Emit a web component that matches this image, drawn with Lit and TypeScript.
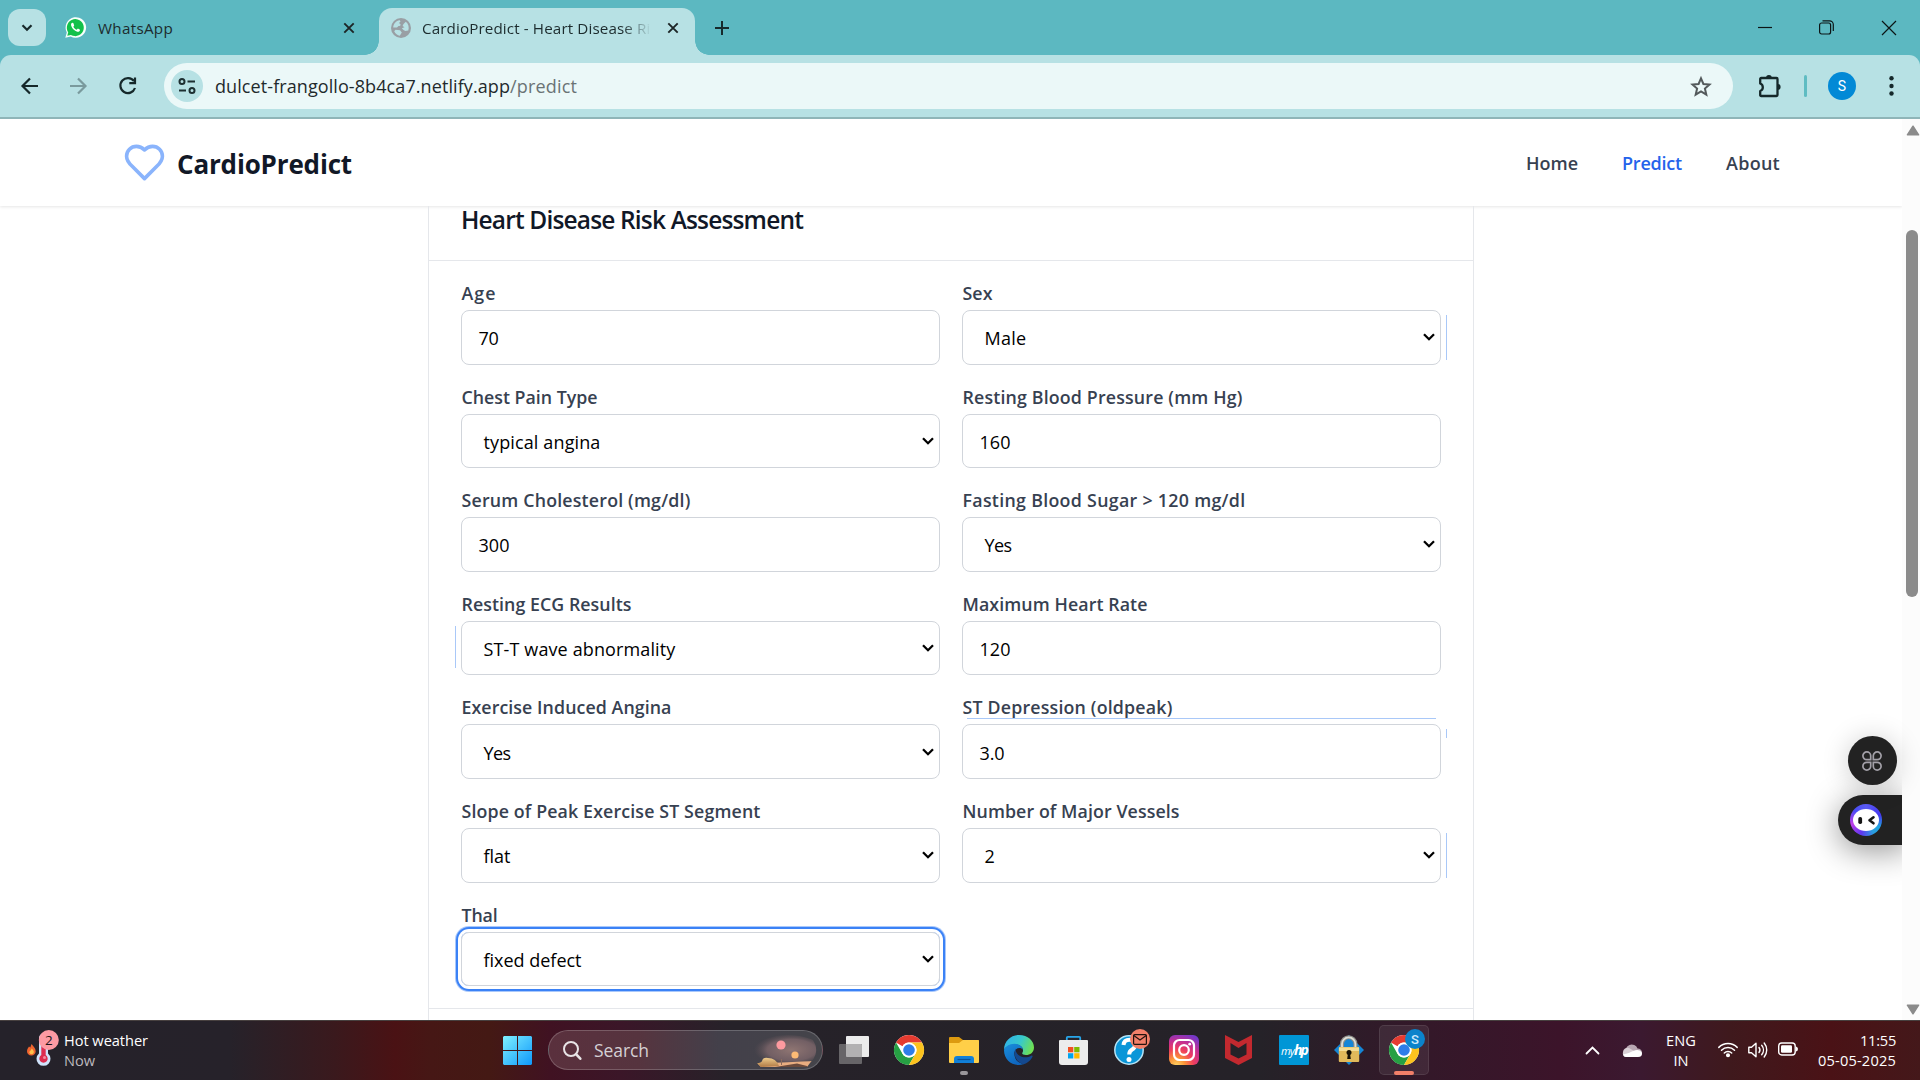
import { LitElement, html, svg, css, nothing } from "lit";
import { customElement, property } from "lit/decorators.js";

/** One line of text whose tracking is set so that it spans `w` pixels. */
@customElement("fit-text")
class FitText extends LitElement {
  @property({ type: Number }) w = 0;
  static styles = css`
    :host { display: inline-block; white-space: pre; flex: none; }
  `;
  render() {
    return html`<slot></slot>`;
  }
  firstUpdated() {
    this.fit();
    document.fonts?.ready.then(() => this.fit());
  }
  fit() {
    const n = (this.textContent ?? "").length;
    if (!this.w || !n) return;
    this.style.letterSpacing = "0px";
    const natural = this.getBoundingClientRect().width;
    this.style.letterSpacing = `${((this.w - natural) / n).toFixed(3)}px`;
  }
}

const t = (text: string, w: number) => html`<fit-text .w=${w}>${text}</fit-text>`;

type Field = {
  label: string;
  lw: number;
  value: string;
  vw: number;
  select?: boolean;
  focus?: boolean;
  trace?: string;
};

const FIELDS: Field[] = [
  { label: "Age", lw: 35, value: "70", vw: 20 },
  { label: "Sex", lw: 30, value: "Male", vw: 42, select: true, trace: "right" },
  { label: "Chest Pain Type", lw: 136, value: "typical angina", vw: 117, select: true },
  { label: "Resting Blood Pressure (mm Hg)", lw: 280, value: "160", vw: 31 },
  { label: "Serum Cholesterol (mg/dl)", lw: 229, value: "300", vw: 31 },
  { label: "Fasting Blood Sugar > 120 mg/dl", lw: 283, value: "Yes", vw: 27, select: true },
  { label: "Resting ECG Results", lw: 170, value: "ST-T wave abnormality", vw: 192, select: true, trace: "left" },
  { label: "Maximum Heart Rate", lw: 185, value: "120", vw: 31 },
  { label: "Exercise Induced Angina", lw: 210, value: "Yes", vw: 27, select: true },
  { label: "ST Depression (oldpeak)", lw: 210, value: "3.0", vw: 25, trace: "top" },
  { label: "Slope of Peak Exercise ST Segment", lw: 299, value: "flat", vw: 27, select: true },
  { label: "Number of Major Vessels", lw: 217, value: "2", vw: 10, select: true, trace: "right" },
  { label: "Thal", lw: 36, value: "fixed defect", vw: 98, select: true, focus: true },
];

const closeX = html`<svg width="12" height="12" viewBox="0 0 12 12"><path d="M1.3 1.3 10.7 10.7M10.7 1.3 1.3 10.7" stroke="#1c2526" stroke-width="1.900" fill="none"/></svg>`;

const chrome = html`<svg width="30" height="30" viewBox="0 0 48 48">
  <circle cx="24" cy="24" r="24" fill="#fff"/>
  <path d="M3.2 12A24 24 0 0 1 44.8 12H24A12 12 0 0 0 13.6 18Z" fill="#e53b30"/>
  <path d="M3.2 12A24 24 0 0 0 24 48L34.4 30A12 12 0 0 1 13.6 30Z" fill="#26a043"/>
  <path d="M44.8 12A24 24 0 0 1 24 48L34.4 30A12 12 0 0 0 34.4 18L24 12Z" fill="#fcc31e"/>
  <circle cx="24" cy="24" r="12" fill="#fff"/>
  <circle cx="24" cy="24" r="9.3" fill="#2f7de9"/>
</svg>`;

@customElement("browser-chrome")
class BrowserChrome extends LitElement {
  static styles = css`
    :host { display: block; height: 119px; background: #5cb8c1; font-family: "Open Sans", "Noto Sans", sans-serif; color: #1c2b2d; }
    svg { display: block; flex: none; overflow: visible; }
    .tabs { display: flex; height: 55px; align-items: center; }
    .search { width: 38px; height: 37px; margin-left: 8px; border-radius: 12px; background: #b7e1e4; display: grid; place-items: center; }
    .tab { display: flex; align-items: center; box-sizing: border-box; font-size: 15.200px; }
    .idle { width: 333px; padding: 0 24px 0 19px; gap: 12px; }
    .grow { flex: 1; }
    .active { width: 316px; height: 47px; margin-top: 8px; padding: 0 15px 8px 12px; background: #b7e1e4; border-radius: 13px 13px 0 0; position: relative; }
    .active::before, .active::after { content: ""; position: absolute; bottom: 0; width: 14px; height: 14px; }
    .active::before { left: -14px; background: radial-gradient(circle at 0 0, transparent 13.5px, #b7e1e4 14px); }
    .active::after { right: -14px; background: radial-gradient(circle at 100% 0, transparent 13.5px, #b7e1e4 14px); }
    .title { width: 230px; margin-left: 11px; margin-right: 15px; overflow: hidden; -webkit-mask-image: linear-gradient(90deg, #000 200px, transparent 229px); mask-image: linear-gradient(90deg, #000 200px, transparent 229px); }
    .title fit-text { display: block; width: max-content; }
    .plus { margin-left: 20px; }
    .win { display: flex; gap: 48px; margin-left: auto; margin-right: 24px; align-items: center; }
    .bar { display: flex; align-items: center; box-sizing: border-box; height: 64px; background: #b7e1e4; border-bottom: 2px solid #8fb5b8; border-radius: 11px 11px 0 0; padding: 0 20px; }
    .nav { display: flex; gap: 29px; width: 144px; align-items: center; }
    .pill { display: flex; align-items: center; box-sizing: border-box; width: 1569px; height: 46px; border-radius: 23px; background: #ebf8f8; padding: 0 21px 0 7px; font-size: 18px; color: #1f2a2c; }
    .site { width: 32px; height: 32px; border-radius: 50%; background: #b7e1e4; display: grid; place-items: center; margin-right: 12px; }
    .path { color: #6a7375; }
    .pill .star { margin-left: auto; }
    .ext { margin-left: 25px; }
    .sep { width: 3px; height: 22px; border-radius: 2px; background: #5fbcc2; margin-left: 23px; }
    .avatar { width: 28px; height: 28px; border-radius: 50%; background: #0289d6; color: #fff; font: 14px Roboto, sans-serif; display: grid; place-items: center; margin-left: 21px; }
    .dots { margin-left: 33px; }
  `;
  render() {
    return html`
      <div class="tabs">
        <div class="search">
          <svg width="12" height="8" viewBox="0 0 12 8"><path d="M1.5 1.3 6 5.8 10.5 1.3" stroke="#18292b" stroke-width="2.2" fill="none"/></svg>
        </div>
        <div class="tab idle">
          <svg width="21" height="21" viewBox="0 0 21 21">
            <path d="M.3 20.8 1.8 15.400A10.300 10.300 0 1 1 5.700 19.400Z" fill="#f7fffb"/>
            <path d="M2.300 18.800 3.200 15.300A8.500 8.500 0 1 1 5.900 17.900Z" fill="#12c14a"/>
            <path d="M7.200 5.800C6 6.400 5.800 7.700 6.300 9 7.300 11.700 9.400 13.900 12.200 14.700 13.600 15.100 15 14.300 15 12.700L12.900 11.500 11.700 12.800C10.100 12.200 9 11 8.400 9.700L9.200 8.600 8.300 6Z" fill="#fff"/>
          </svg>
          ${t("WhatsApp", 75)}
          <span class="grow"></span>
          ${closeX}
        </div>
        <div class="tab active">
          <svg width="20" height="20" viewBox="0 0 20 20">
            <circle cx="10" cy="10" r="10" fill="#999fa4"/>
            <path d="M2.200 9.600C2.200 5.800 5 2.600 8.800 2.200L9.500 3.500 8 5 9.500 6.200C9.800 7.800 8.800 8 7.500 8.100L6 9.400ZM10.800 10.300 13.500 9.300 11.600 8 12.500 6 14.800 3.800C17.600 6 18.300 9.500 17.300 12.600L14.300 13 12.500 12ZM4.500 11.800 9 12.200 10.800 14.500 8.800 17.800C6.500 17.400 4.400 15.800 3.200 13.300Z" fill="#b7e1e4"/>
          </svg>
          <div class="title">${t("CardioPredict - Heart Disease Risk", 244)}</div>
          ${closeX}
        </div>
        <svg class="plus" width="14" height="14" viewBox="0 0 14 14"><path d="M7 0V14M0 7H14" stroke="#172a2c" stroke-width="2"/></svg>
        <div class="win">
          <svg width="14" height="14" viewBox="0 0 14 14"><path d="M1 6.500H15" stroke="#0c1516" stroke-width="1.200"/></svg>
          <svg width="15" height="15" viewBox="0 0 15 15"><rect x=".6" y="3" width="11" height="11" rx="2" fill="none" stroke="#0c1516" stroke-width="1.200"/><path d="M3.500.8H10.500A3.800 3.800 0 0 1 14.300 4.600V11" fill="none" stroke="#0c1516" stroke-width="1.200"/></svg>
          <svg width="14" height="14" viewBox="0 0 14 14"><path d="M0 0 14 14M14 0 0 14" stroke="#0c1516" stroke-width="1.200"/></svg>
        </div>
      </div>
      <div class="bar">
        <div class="nav">
          <svg width="20" height="18" viewBox="0 0 20 18"><path d="M18 9H3M10 1.500 2.500 9 10 16.500" fill="none" stroke="#15282a" stroke-width="2.200"/></svg>
          <svg width="20" height="18" viewBox="0 0 20 18"><path d="M1 9H16M9 1.500 16.500 9 9 16.500" fill="none" stroke="#7a9a9d" stroke-width="2.200"/></svg>
          <svg width="20" height="20" viewBox="0 0 20 20"><path d="M16 5.200A7.500 7.500 0 1 0 17 12M17 1.500V7.200H11.300" fill="none" stroke="#15282a" stroke-width="2.200"/></svg>
        </div>
        <div class="pill">
          <div class="site">
            <svg width="18" height="16" viewBox="0 0 18 16" fill="none" stroke="#1d2f31" stroke-width="2"><circle cx="4" cy="3.500" r="2.500"/><path d="M9.500 3.500H17M1 12.500H8"/><circle cx="14" cy="12.500" r="2.500"/></svg>
          </div>
          ${t("dulcet-frangollo-8b4ca7.netlify.app", 295)}<span class="path">${t("/predict", 67)}</span>
          <svg class="star" width="22" height="21" viewBox="0 0 22 21"><path d="M11 2.300 13.400 8 19.500 8.500 14.900 12.600 16.300 18.600 11 15.400 5.700 18.600 7.100 12.600 2.500 8.500 8.600 8Z" fill="none" stroke="#53595b" stroke-width="2"/></svg>
        </div>
        <svg class="ext" width="23" height="23" viewBox="0 0 23 23"><path d="M3.200 3H18.500Q19.500 3 19.500 4V20Q19.500 21 18.500 21H3.200Q2.200 21 2.200 20V16A4 4 0 0 0 2.200 8.500V4Q2.200 3 3.200 3Z" fill="none" stroke="#15282a" stroke-width="2.300" stroke-linejoin="round"/><path d="M8 3A2.900 2.900 0 0 1 13.800 3ZM19.700 9A2.900 2.900 0 0 1 19.700 14.800Z" fill="#15282a"/></svg>
        <div class="sep"></div>
        <div class="avatar">S</div>
        <svg class="dots" width="5" height="20" viewBox="0 0 5 20" fill="#15282a"><circle cx="2.500" cy="2.200" r="2.200"/><circle cx="2.500" cy="10" r="2.200"/><circle cx="2.500" cy="17.500" r="2.200"/></svg>
      </div>
    `;
  }
}

@customElement("cardio-page")
class CardioPage extends LitElement {
  static styles = css`
    :host { display: flex; height: 901px; background: #fff; position: relative; overflow: hidden; font-family: "Open Sans", "Noto Sans", sans-serif; }
    svg { display: block; flex: none; overflow: visible; }
    .view { width: 1902px; display: flex; flex-direction: column; }
    header { display: flex; align-items: center; box-sizing: border-box; height: 87px; flex: none; padding: 0 122px 0 123px; box-shadow: 0 1px 3px rgba(0, 0, 0, 0.1); }
    .brand { font-size: 26px; font-weight: 700; color: #111827; margin-left: 11px; padding-top: 2px; }
    nav { display: flex; gap: 44px; margin-left: auto; font-size: 18px; font-weight: 570; color: #374151; }
    nav .on { color: #2563eb; }
    .card { width: 1046px; box-sizing: border-box; margin-left: 428px; flex: 1; border: solid #e5e7eb; border-width: 0 1px; display: flex; flex-direction: column; }
    h1 { margin: 0; box-sizing: border-box; height: 55px; border-bottom: 1px solid #e5e7eb; padding: 0 32px; font-size: 24.500px; line-height: 27px; font-weight: 560; color: #111827; }
    .grid { display: grid; grid-template-columns: 479px 479px; column-gap: 22px; grid-auto-rows: 103.600px; padding: 19px 32px 0; height: 728px; border-bottom: 1px solid #e5e7eb; }
    .label { height: 30px; line-height: 27px; font-size: 17.800px; font-weight: 570; color: #374151; padding-left: 0.500px; }
    .box { box-sizing: border-box; height: 54.600px; border: 1px solid #d1d5db; border-radius: 8px; padding: 2px 5px 0 16.500px; display: flex; align-items: center; justify-content: space-between; font-size: 18px; color: #000; position: relative; }
    .select { padding-left: 21.500px; }
    .select svg { margin-top: -2px; }
    .focus { box-shadow: 0 0 0 3px #fff, 0 0 0 5px #3b82f6, 0 0 0 6px #a9c8fb; }
    .trace::before, .trace::after { content: ""; position: absolute; background: #a9c8f8; }
    .right::before { right: -7px; top: 4px; width: 1px; height: 45px; }
    .left::before { left: -7px; top: 4px; width: 1px; height: 42px; }
    .top::before { left: 4px; right: 4px; top: -7px; height: 1px; }
    .top::after { right: -7px; top: 4px; width: 1px; height: 9px; }
    .scroll { width: 18px; background: #fcfcfc; box-sizing: border-box; padding: 6px 2px 5px 4px; display: flex; flex-direction: column; justify-content: space-between; }
    .thumb { width: 12px; height: 367px; border-radius: 6px; background: #8b8b8b; margin-bottom: 314px; }
    .fab { position: absolute; left: 1848px; top: 617px; width: 49px; height: 49px; border-radius: 50%; background: #222; display: grid; place-items: center; box-shadow: 0 2px 28px rgba(0, 0, 0, 0.2); }
    .fab svg { margin-right: 1px; }
    .clip { position: absolute; left: 1740px; top: 560px; width: 162px; height: 280px; overflow: hidden; }
    .bot { position: absolute; left: 98px; top: 116px; width: 70px; height: 50px; border-radius: 25px 0 0 25px; background: #222; box-shadow: 0 6px 32px rgba(0, 0, 0, 0.42); display: flex; align-items: center; padding-left: 12px; box-sizing: border-box; }
    .face { width: 32px; height: 32px; border-radius: 50%; background: conic-gradient(#5b5cf5, #4537f0 70deg, #20a7e0 120deg, #2a9ee0 150deg, #5f36f0 200deg, #c03fe8 255deg, #4a4df5 310deg, #5b5cf5); display: grid; place-items: center; }
  `;
  field(f: Field) {
    const cls = ["box", f.select ? "select" : "", f.focus ? "focus" : "", f.trace ? `trace ${f.trace}` : ""].join(" ");
    return html`<div>
      <div class="label">${t(f.label, f.lw)}</div>
      <div class=${cls}>
        ${t(f.value, f.vw)}
        ${f.select
          ? html`<svg width="12" height="8" viewBox="0 0 12 8"><path d="M1 1.300 6 6.200 11 1.300" stroke="#000" stroke-width="2.300" fill="none"/></svg>`
          : nothing}
      </div>
    </div>`;
  }
  render() {
    return html`
      <div class="view">
        <header>
          <svg width="43" height="43" viewBox="0 0 24 24" fill="none" stroke="#8ab4fc" stroke-width="2" stroke-linejoin="round"><path d="M19 14c1.490-1.460 3-3.210 3-5.500A5.500 5.500 0 0 0 16.500 3c-1.760 0-3 .5-4.500 2-1.500-1.500-2.740-2-4.500-2A5.500 5.500 0 0 0 2 8.500c0 2.300 1.500 4.050 3 5.500l7 7Z"/></svg>
          <span class="brand">${t("CardioPredict", 175)}</span>
          <nav>${t("Home", 52)}<span class="on">${t("Predict", 60)}</span>${t("About", 54)}</nav>
        </header>
        <section class="card">
          <h1>${t("Heart Disease Risk Assessment", 342)}</h1>
          <div class="grid">${FIELDS.map((f) => this.field(f))}</div>
        </section>
      </div>
      <div class="clip">
        <div class="bot">
          <div class="face">
            <svg width="26" height="22" viewBox="0 0 26 22"><ellipse cx="13" cy="11" rx="13" ry="11" fill="#fff"/><rect x="5.300" y="8" width="3.800" height="7" rx="1.700" fill="#151515"/><path d="M20.500 8.300 16.500 11.300 20.500 14.300" fill="none" stroke="#151515" stroke-width="2.600" stroke-linecap="round" stroke-linejoin="round"/></svg>
          </div>
        </div>
      </div>
      <div class="fab">
        <svg width="20" height="20" viewBox="0 0 20 20" fill="none" stroke="#a3a0a8" stroke-width="1.700">
          ${[0, 90, 180, 270].map((a) => svg`<path transform="rotate(${a} 10 10)" d="M8.700 8.700H4.800A3.900 3.900 0 1 1 8.700 4.800Z"/>`)}
        </svg>
      </div>
      <div class="scroll">
        <svg width="14" height="11" viewBox="0 0 14 11"><path d="M7 1.200 12.600 9.800H1.400Z" fill="#8b8b8b" stroke="#8b8b8b" stroke-width="1.500" stroke-linejoin="round"/></svg>
        <div class="thumb"></div>
        <svg width="14" height="11" viewBox="0 0 14 11"><path d="M7 9.800 12.600 1.200H1.400Z" fill="#8b8b8b" stroke="#8b8b8b" stroke-width="1.500" stroke-linejoin="round"/></svg>
      </div>
    `;
  }
}

@customElement("task-bar")
class TaskBar extends LitElement {
  static styles = css`
    :host { display: flex; align-items: center; box-sizing: border-box; height: 60px; border-top: 1px solid #47403f; padding-bottom: 1px; color: #fff; font-family: "Open Sans", "Noto Sans", sans-serif;
      background: linear-gradient(90deg, #25222a 0, #26222a 230px, #3a191d 335px, #4a1214 395px, #461715 430px, #441914 490px, #401222 550px, #3b1628 620px, #262229 730px, #252228 1260px, #321929 1400px, #3c142a 1560px, #3b1930 1640px, #3f191d 1730px, #4a1216 1830px, #44181a 1920px); }
    svg { display: block; flex: none; overflow: visible; }
    .weather { display: flex; width: 476px; margin-left: 27px; gap: 5px; font-size: 14.600px; line-height: 20px; }
    .weather svg { margin-top: -1px; }
    .col { display: flex; flex-direction: column; margin-top: -1px; }
    .dim { color: #bdb9bd; }
    .pill { display: flex; align-items: center; box-sizing: border-box; width: 275px; height: 40px; margin-left: 16px; border-radius: 20px; border: 1px solid rgba(255, 255, 255, 0.2); background: linear-gradient(90deg, #5a303d, #56343f 90px, #43404a 170px, #44444a); padding: 0 3px 0 14px; color: #d5d0d4; font-size: 17.500px; }
    .pill fit-text { margin-left: 12px; }
    .scene { margin-left: auto; }
    .apps { display: flex; align-items: center; gap: 25px; margin-left: 16px; height: 100%; }
    .app { width: 30px; height: 30px; position: relative; }
    .app .dot { position: absolute; left: 11px; top: 36px; width: 8px; height: 4px; border-radius: 2px; background: #9a979b; }
    .badge { position: absolute; left: 16px; top: -6px; width: 20px; height: 20px; border-radius: 50%; background: #f27f69; display: grid; place-items: center; }
    .current::before { content: ""; position: absolute; left: -10px; top: -10px; width: 48px; height: 48px; border: 1px solid rgba(255, 255, 255, 0.09); border-radius: 5px; background: rgba(255, 255, 255, 0.07); }
    .current svg { position: relative; }
    .current .dot { left: 5px; width: 20px; background: #f27f69; }
    .s { background: #0b83cb; color: #cfeafb; font: 500 13px Roboto, sans-serif; }
    .hp { background: #0096d6; font: italic 11px/30px "Open Sans", sans-serif; text-align: center; border-radius: 1px; white-space: nowrap; }
    .hp b { font-size: 14px; }
    .tray { display: flex; align-items: center; margin-left: auto; margin-right: 24px; font-size: 14.600px; line-height: 20px; }
    .cloud { margin-left: 23px; }
    .lang { align-items: center; margin-left: 24px; }
    .net { display: flex; gap: 10px; margin-left: 22px; }
    .clock { align-items: flex-end; margin-left: 20px; }
  `;
  render() {
    return html`
      <div class="weather">
        <svg width="32" height="38" viewBox="0 0 32 38">
          <path d="M4.500 14C6 16 8.700 18 8.700 21.200A4.300 4.300 0 0 1 0 21.200C0 19 1.300 18 2 16.500L3.300 17.500Z" fill="#f0642f"/>
          <path d="M4.800 18.500C6 20 7 20.800 6.800 22.500A2.300 2.300 0 0 1 2.300 22.500C2.300 21 4.200 20.500 4.800 18.500Z" fill="#ffc24a"/>
          <path d="M12 8A4.500 4.500 0 0 1 21 8V23.500A7 7 0 1 1 12 23.500Z" fill="#cfe3fb"/>
          <path d="M14.300 10H18.700V25A4.200 4.200 0 1 1 14.300 25Z" fill="#dd2c4f"/>
          <circle cx="17.500" cy="27.500" r="1.500" fill="#f58aa2"/>
          <circle cx="21.800" cy="10" r="10" fill="#fd9aa3"/>
          <text x="21.800" y="15" text-anchor="middle" font-size="13.500" fill="#1c1416">2</text>
        </svg>
        <div class="col">${t("Hot weather", 84)}<span class="dim">${t("Now", 31)}</span></div>
      </div>
      <svg width="29" height="29" viewBox="0 0 29 29">
        <defs><linearGradient id="wg" gradientUnits="userSpaceOnUse" x1="0" y1="0" x2="29" y2="29"><stop offset="0" stop-color="#7ff0ff"/><stop offset="1" stop-color="#0e98fb"/></linearGradient></defs>
        <path d="M1 0H14V14H0V1ZM15 0H28L29 1V14H15ZM0 15H14V29H1L0 28ZM15 15H29V28L28 29H15Z" fill="url(#wg)"/>
      </svg>
      <div class="pill">
        <svg width="19" height="19" viewBox="0 0 19 19" fill="none" stroke="#e8e4e6" stroke-width="2"><circle cx="8" cy="8" r="7"/><path d="M13 13.200 17.300 17.700" stroke-width="2.600" stroke-linecap="round"/></svg>
        ${t("Search", 55)}
        <svg class="scene" width="66" height="34" viewBox="0 0 66 34">
          <defs>
            <radialGradient id="haze" cx=".55" cy=".5" r=".55"><stop offset="0" stop-color="#8f7572"/><stop offset=".65" stop-color="#776267" stop-opacity=".9"/><stop offset="1" stop-color="#5a4d53" stop-opacity="0"/></radialGradient>
            <linearGradient id="sand" x1="0" y1="0" x2="0" y2="1"><stop offset="0" stop-color="#eecb8c"/><stop offset="1" stop-color="#b07a45"/></linearGradient>
            <clipPath id="sc"><path d="M0 0H48A17 17 0 0 1 57 30L54 34H0Z"/></clipPath>
          </defs>
          <g clip-path="url(#sc)">
            <ellipse cx="35" cy="17" rx="34" ry="15" fill="url(#haze)"/>
            <path d="M5 31Q30 29 64 28V34H8Z" fill="#e9ad80"/>
            <path d="M22 34 44 30.500 58 34Z" fill="#6b4a3c"/>
            <path d="M4 30Q8 30 9 28 10 24 15 25 23 25 26 33L8 34Z" fill="url(#sand)"/>
          </g>
          <circle cx="28" cy="12" r="4.600" fill="#fd9a9f"/><circle cx="42" cy="22" r="3.600" fill="#fdbb75"/>
          <path d="M28.500 26V32" stroke="#8c6a5b" stroke-width="1"/>
        </svg>
      </div>
      <div class="apps">
        <div class="app">
          <svg width="30" height="30" viewBox="0 0 30 30"><rect x="7" y="1" width="23" height="21" rx="1" fill="#ececec"/><rect x="0" y="9" width="23" height="20" rx="1" fill="#6d6b6e" fill-opacity=".92"/><path d="M7 9H22Q23 9 23 10V22H8Q7 22 7 21Z" fill="#b2b1b2"/></svg>
        </div>
        <div class="app">${chrome}</div>
        <div class="app">
          <svg width="30" height="30" viewBox="0 0 30 30"><path d="M0 3Q0 2 1 2H10L14 5H29Q30 5 30 6V12H0Z" fill="#dc9a10"/><path d="M0 8H10L14 5H29Q30 5 30 6V27Q30 28 29 28H1Q0 28 0 27Z" fill="#ffcf48"/><path d="M5 28V24Q5 21 8 21H22Q25 21 25 24V28Z" fill="#1180d8"/><path d="M8.500 24.500H21.500" stroke="#0a5299" stroke-width="1.200"/></svg>
          <span class="dot"></span>
        </div>
        <div class="app">
          <svg width="30" height="30" viewBox="0 0 30 30">
            <defs>
              <linearGradient id="e1" x1="0" y1=".2" x2="1" y2=".5"><stop offset="0" stop-color="#2fb1ea"/><stop offset=".55" stop-color="#38c9cb"/><stop offset="1" stop-color="#6fe052"/></linearGradient>
              <linearGradient id="e2" x1="0" y1="0" x2=".6" y2="1"><stop offset="0" stop-color="#1a8fdc"/><stop offset="1" stop-color="#0e64bd"/></linearGradient>
            </defs>
            <path d="M0 15C0 6 7 0 15 0 24 0 30 6 30 12.500 30 17.500 26 20 22 20 19 20 17.500 19 18.500 17.500 20.500 14 17 9.500 11.500 9.500 5 9.500 1 12.500 0 15Z" fill="url(#e1)"/>
            <path d="M0 15C1 12 5 8.800 10.500 8.800 16 8.800 19 12 19 14.800 17 11.800 11.500 12.500 10.500 17 9.500 23 14 29 20 29 10 32.500 0 26 0 15Z" fill="url(#e2)"/>
            <path d="M11.500 13.500C8.500 20.500 13 27.500 19.500 29.200 24 28 27.500 24.500 28.500 21.500 28.800 20.500 28 20.300 27.200 20.800 21 24.500 11.500 21.500 11.500 13.500Z" fill="#14498f"/>
          </svg>
        </div>
        <div class="app">
          <svg width="30" height="30" viewBox="0 0 30 30"><path d="M7.800 6V2.800Q7.800 1.800 8.800 1.800H20.200Q21.200 1.800 21.200 2.800V6" fill="none" stroke="#28a6ea" stroke-width="1.800"/><path d="M0 6Q0 5 1 5H28Q29 5 29 6V27Q29 30 26 30H3Q0 30 0 27Z" fill="#ececec"/><path d="M9 12H14.300V17.300H9Z" fill="#f25022"/><path d="M15.200 12H20.500V17.300H15.200Z" fill="#7fba00"/><path d="M9 18.200H14.300V23.500H9Z" fill="#00a4ef"/><path d="M15.200 18.200H20.500V23.500H15.200Z" fill="#ffb900"/></svg>
        </div>
        <div class="app">
          <svg width="30" height="30" viewBox="0 0 30 30"><circle cx="15" cy="15" r="14.200" fill="#0a96d8" stroke="#b7e4f6" stroke-width="1.500"/><path d="M9.500 10Q10 4.800 15.500 4.800T21 10Q21 13 17.800 14.800 15.300 16.300 15.200 19.500" fill="none" stroke="#fff" stroke-width="4"/><circle cx="15" cy="24.600" r="2.500" fill="#fff"/></svg>
          <span class="badge"><svg width="14" height="11" viewBox="0 0 14 11"><rect x=".6" y=".6" width="12.800" height="9.800" rx="1" fill="none" stroke="#24120f" stroke-width="1.200"/><path d="M.8 1.500 7 6 13.200 1.500" fill="none" stroke="#24120f" stroke-width="1.200"/></svg></span>
        </div>
        <div class="app">
          <svg width="30" height="30" viewBox="0 0 30 30">
            <defs><radialGradient id="ig" cx=".25" cy="1.050" r="1.150"><stop offset="0" stop-color="#ffdc6a"/><stop offset=".25" stop-color="#fb9537"/><stop offset=".5" stop-color="#ef3f5c"/><stop offset=".75" stop-color="#c32f93"/><stop offset="1" stop-color="#7538c8"/></radialGradient></defs>
            <rect width="30" height="30" rx="6" fill="url(#ig)"/><rect x="5" y="5" width="20" height="20" rx="5.500" fill="none" stroke="#fff" stroke-width="2.200"/><circle cx="15" cy="15" r="4.800" fill="none" stroke="#fff" stroke-width="2.200"/><circle cx="20.700" cy="9.200" r="1.400" fill="#fff"/>
          </svg>
        </div>
        <div class="app">
          <svg width="30" height="30" viewBox="0 0 30 30"><path d="M1 0 14.500 7 28 0V23L14.500 30 1 23ZM6.500 8V19.500L14.500 23.500 22.500 19.500V8L14.500 13Z" fill="#c3292f"/></svg>
        </div>
        <div class="app hp">${t("my", 13)}<b>${t("hp", 13)}</b></div>
        <div class="app">
          <svg width="30" height="30" viewBox="0 0 30 30"><path d="M15 0 30 15 15 30 0 15Z" fill="#1486d6"/><path d="M8 13V9A6.700 6.700 0 0 1 21.400 9V13" fill="none" stroke="#8e8e88" stroke-width="4"/><path d="M8 13V9A6.700 6.700 0 0 1 21.400 9V13" fill="none" stroke="#dedfd8" stroke-width="1.800"/><rect x="4.800" y="12" width="20.400" height="15" rx="1" fill="#e0b95b"/><path d="M5 12.500H25V16H5Z" fill="#f2dc94"/><circle cx="15" cy="17.500" r="2.500" fill="#151006"/><path d="M14 18H16L16.800 24H13.200Z" fill="#151006"/></svg>
        </div>
        <div class="app current">${chrome}<span class="badge s">S</span><span class="dot"></span></div>
      </div>
      <div class="tray">
        <svg width="14" height="9" viewBox="0 0 14 9"><path d="M1.500 7.500 7.500 1.500 13.500 7.500" fill="none" stroke="#fff" stroke-width="1.800" stroke-linecap="round"/></svg>
        <svg class="cloud" width="20" height="13" viewBox="0 0 20 13"><path d="M4 9A6 6 0 0 1 15.500 4.500 4.500 4.500 0 0 1 20 8L10 13Z" fill="#b8a7b2"/><path d="M1 8A4.500 4.500 0 0 1 7 4L19 11 4 13Q0 12 1 8Z" fill="#d9d0d6"/><path d="M1 10.500Q7 9.500 11 7 17 4.500 20 8.500 20.500 13 16 13H4Q1.500 13 1 10.500Z" fill="#fff"/></svg>
        <div class="col lang">${t("ENG", 30)}${t("IN", 15)}</div>
        <div class="net">
          <svg width="20" height="15" viewBox="0 0 20 15" fill="none" stroke="#fff" stroke-width="1.500" stroke-linecap="round"><path d="M.8 5.400A13 13 0 0 1 19.200 5.400M3.500 8.300A9.200 9.200 0 0 1 16.500 8.300M6.300 11A5.300 5.300 0 0 1 13.700 11"/><circle cx="10" cy="13.200" r="1.300" fill="#fff"/></svg>
          <svg width="20" height="16" viewBox="0 0 20 16" fill="none" stroke="#fff" stroke-width="1.400" stroke-linecap="round" stroke-linejoin="round"><path d="M.8 5.200H3.500L8 1.200V14.800L3.500 10.800H.8Z"/><path d="M11 5.500A4 4 0 0 1 11 10.500M13.700 3.200A7.500 7.500 0 0 1 13.700 12.800M16.200 1A11 11 0 0 1 16.200 15"/></svg>
          <svg width="20" height="14" viewBox="0 0 20 14"><rect x=".7" y="1" width="16.500" height="12" rx="3" fill="none" stroke="#fff" stroke-width="1.400"/><rect x="3" y="3.200" width="11" height="7.600" rx="1.200" fill="#fff"/><path d="M18 4.500Q20 5 20 7T18 9.500Z" fill="#fff"/></svg>
        </div>
        <div class="col clock">${t("11:55", 36)}${t("05-05-2025", 78)}</div>
      </div>
    `;
  }
}

@customElement("app-root")
class AppRoot extends LitElement {
  static styles = css`
    :host { display: flex; flex-direction: column; width: 1920px; height: 1080px; overflow: hidden; background: #fff; }
  `;
  render() {
    return html`<browser-chrome></browser-chrome><cardio-page></cardio-page><task-bar></task-bar>`;
  }
}
